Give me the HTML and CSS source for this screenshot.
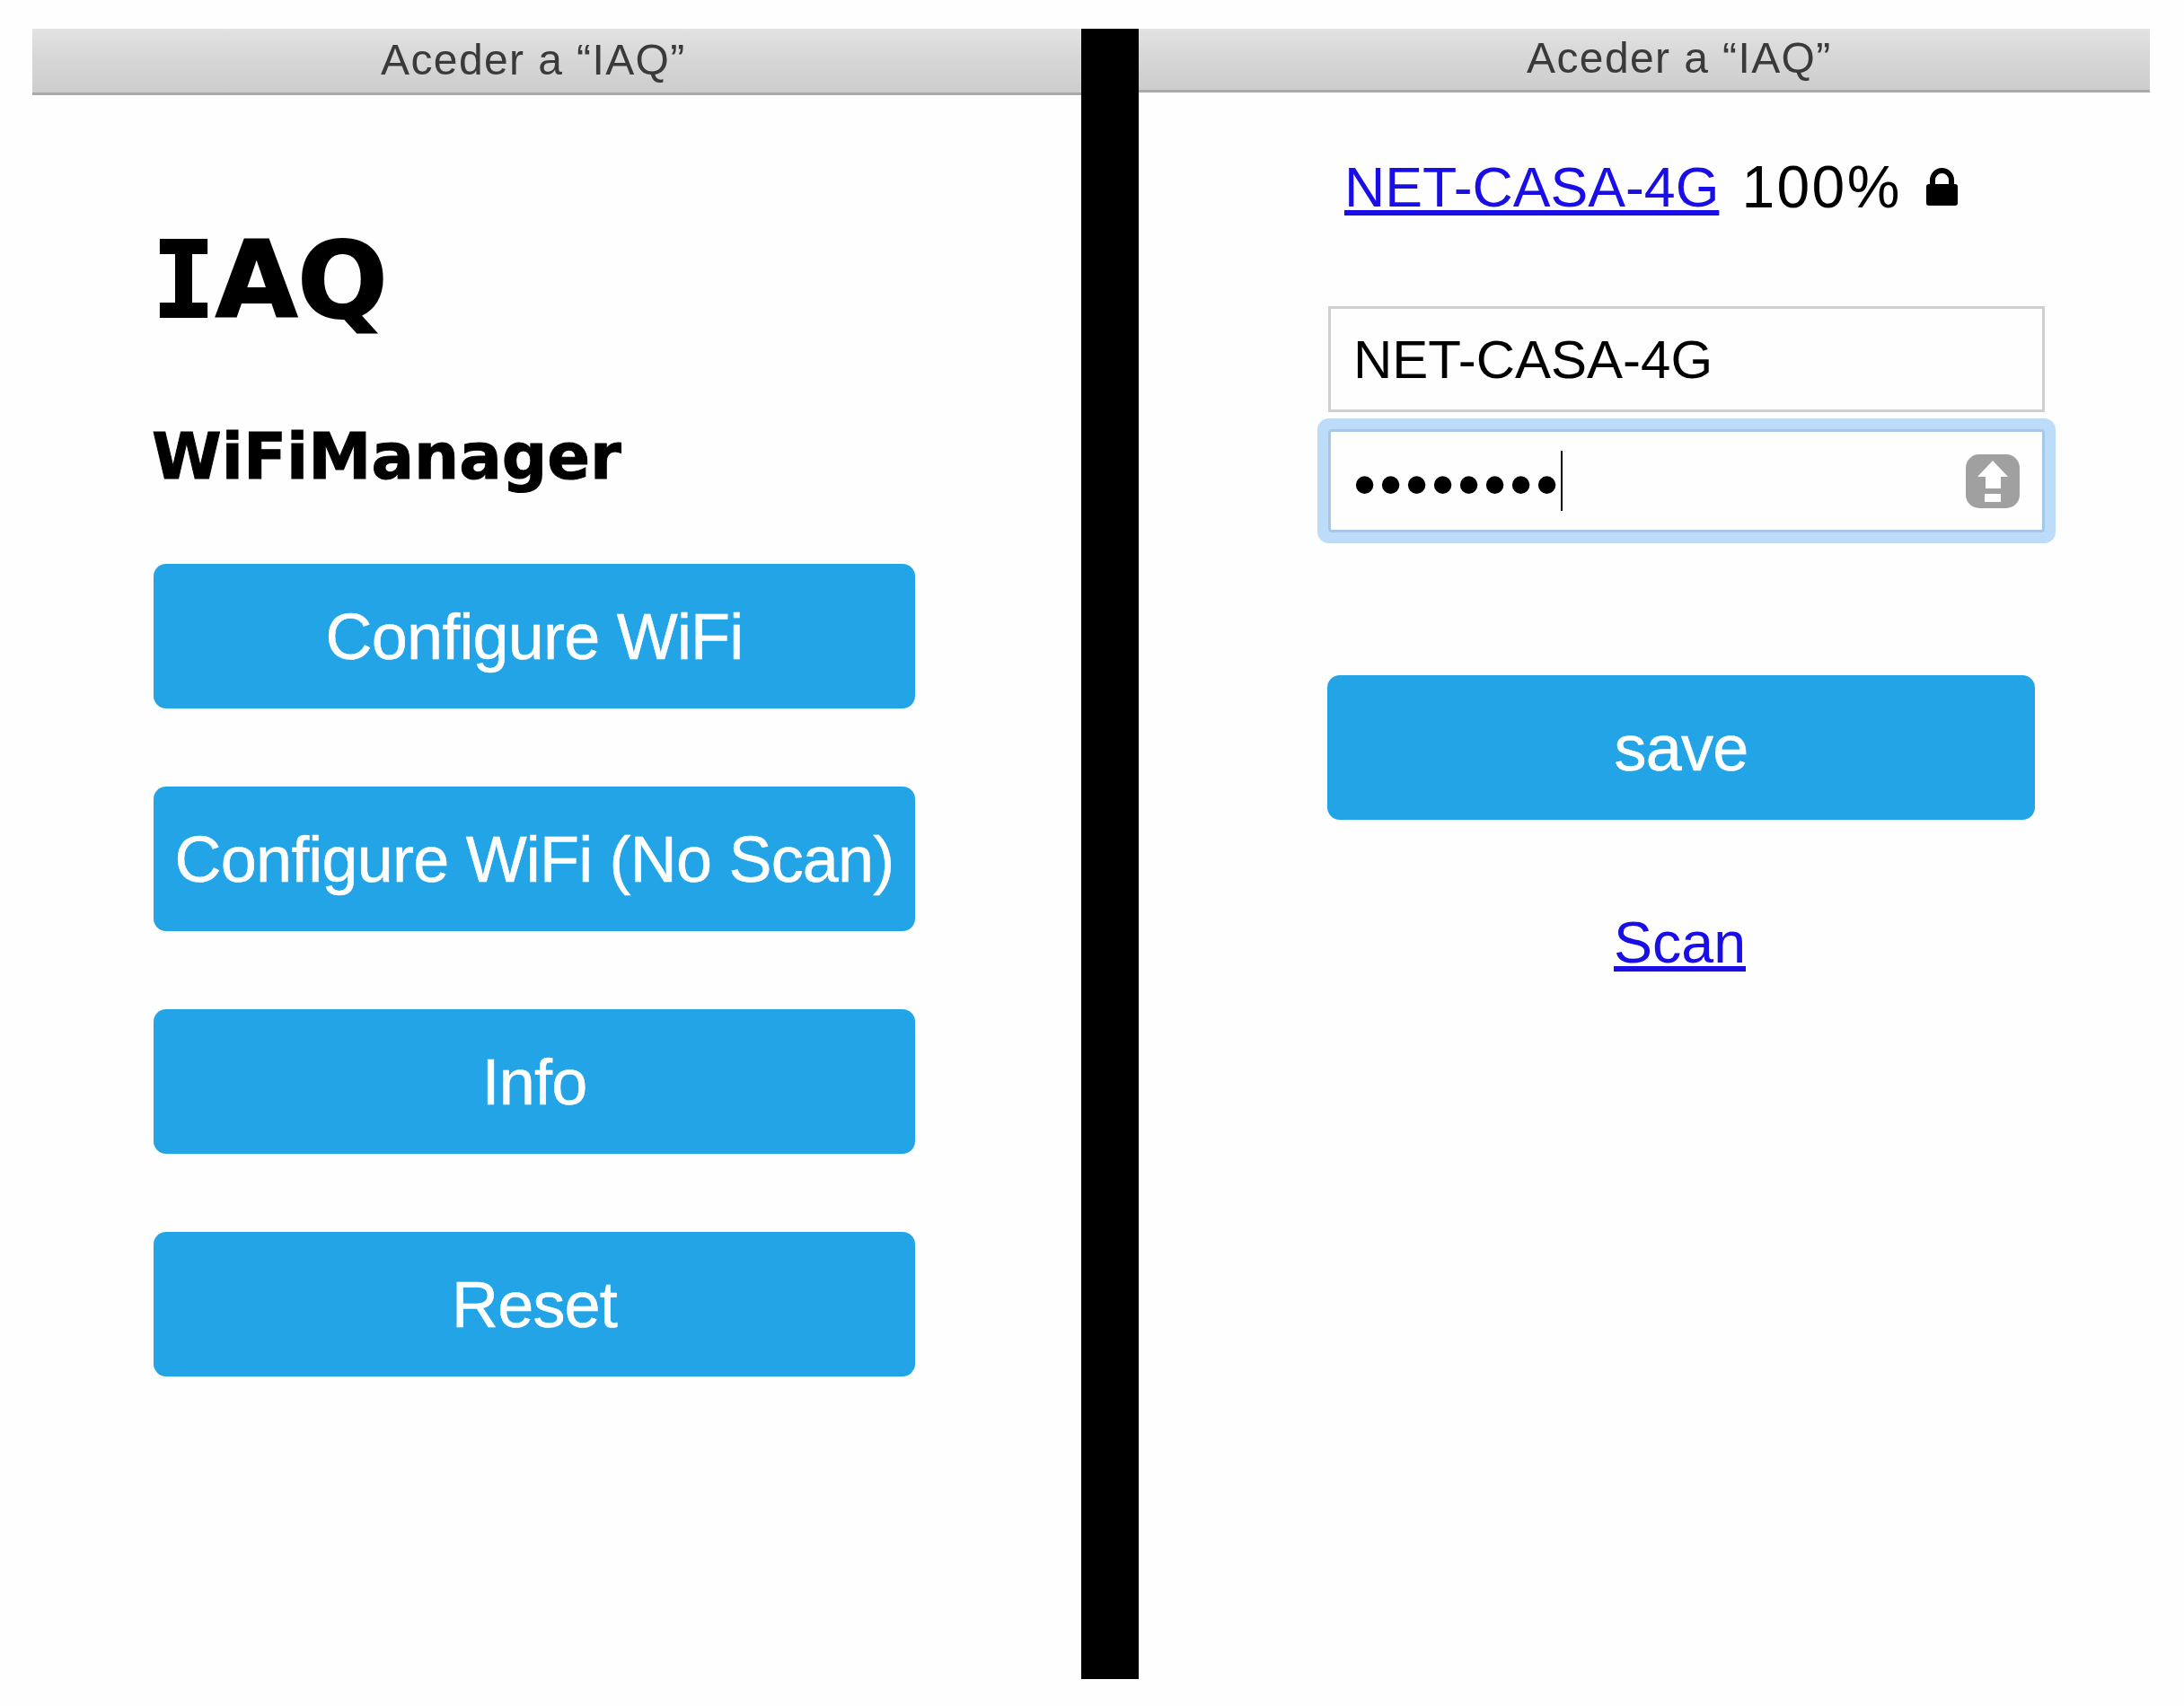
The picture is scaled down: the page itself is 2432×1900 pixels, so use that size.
FILE: index.html
```html
<!DOCTYPE html>
<html>
<head>
    <title>
        Aceder a IAQ
    </title>
    <link rel="stylesheet" href="styles.css">
</head>

<body>
    <div class="container">
        <!-- Main menu -->
        <div class="pane pane-left">
            <div class="title-bar title-left">Aceder a “IAQ”</div>
            <div class="menu">
                <h1 class="app-name"><span class="serif-i">I</span>AQ</h1>
                <h3 class="app-sub">WiFiManager</h3>
                <div class="button-list">
                    <button class="wifi-btn">Configure WiFi</button>
                    <button class="wifi-btn">Configure WiFi (No Scan)</button>
                    <button class="wifi-btn">Info</button>
                    <button class="wifi-btn">Reset</button>
                </div>
            </div>
        </div>

        <div class="divider"></div>

        <!-- Network form -->
        <div class="pane pane-right">
            <div class="title-bar title-right">Aceder a “IAQ”</div>
            <div class="form-div">
                <div class="network-row">
                    <a href="#" class="link">NET-CASA-4G</a>
                    <span class="signal">100%</span>
                    <svg class="lock" viewBox="0 0 35 42" width="35" height="42">
                        <path d="M7 20V13.5a10.5 10.5 0 0 1 21 0V20" fill="none" stroke="#000" stroke-width="6"/>
                        <rect x="0" y="18" width="35" height="24" rx="3" fill="#000"/>
                    </svg>
                </div>
                <div class="field field-first">NET-CASA-4G</div>
                <div class="field field-focus">
                    <span class="dots">••••••••</span>
                    <span class="caret"></span>
                    <svg class="caps" viewBox="0 0 60 60" width="60" height="60">
                        <rect width="60" height="60" rx="15" fill="#a0a0a0"/>
                        <path d="M30 7L47 25H39V38H22V25H13Z" fill="#fff"/>
                        <rect x="21" y="44" width="18" height="9" fill="#fff"/>
                    </svg>
                </div>
                <button class="wifi-btn save-btn">save</button>
                <div class="scan-row"><a href="#" class="link">Scan</a></div>
            </div>
        </div>
    </div>
</body>

</html>
```

FILE: styles.css
```css
body{
    margin: 0;
    padding: 0;
    background-color: #fefefe;
    font-family: "Liberation Sans", Arial, sans-serif;
}
/* the source is an upscaled screenshot, everything is a bit soft */
.container{
    display: flex;
    flex-direction: row;
    width: 2358px;
    height: 1838px;
    margin-top: 32px;
    margin-left: 36px;
    filter: blur(0.7px);
}
.pane-left{
    width: 1168px;
}
.pane-right{
    width: 1126px;
}
.divider{
    width: 64px;
    background-color: black;
}
.title-bar{
    box-sizing: border-box;
    background: linear-gradient(#e3e3e3, #d8d8d8 40%, #cdcdcd);
    border-bottom: 3px solid #a9a9a9;
    color: #3a3a3a;
    font-size: 48px;
    letter-spacing: 1.4px;
    white-space: nowrap;
}
.title-left{
    height: 74px;
    line-height: 70px;
    padding-left: 388px;
}
.title-right{
    height: 71px;
    line-height: 66px;
    padding-left: 432px;
}
.menu{
    padding-left: 133px;
}
.app-name{
    margin: 0;
    padding-top: 141px;
    font-family: "DejaVu Sans", Verdana, sans-serif;
    font-size: 118px;
    font-weight: bold;
    line-height: 130px;
    color: black;
    -webkit-text-stroke: 2px black;
}
.serif-i{
    font-family: "DejaVu Sans Mono", monospace;
}
.app-sub{
    margin: 0;
    padding-top: 87px;
    font-family: "DejaVu Sans", Verdana, sans-serif;
    font-size: 70.5px;
    font-weight: bold;
    line-height: 90px;
    color: black;
    -webkit-text-stroke: 1px black;
}
.button-list{
    display: flex;
    flex-direction: column;
    gap: 87px;
    margin-top: 74px;
    margin-left: 2px;
}
.wifi-btn{
    width: 848px;
    height: 161px;
    padding: 0;
    border: 0;
    border-radius: 14px;
    background-color: #22a4e6;
    color: white;
    font-family: "Liberation Sans", Arial, sans-serif;
    font-size: 72px;
    letter-spacing: -0.8px;
    -webkit-text-stroke: 0.5px white;
}
.form-div{
    padding-left: 211px;
}
.network-row{
    display: flex;
    align-items: center;
    height: 80px;
    margin-top: 65px;
    margin-left: 18px;
    font-size: 62.6px;
    color: black;
}
.link{
    color: #1a0ee6;
}
.signal{
    margin-left: 25px;
    font-size: 66px;
    letter-spacing: 2.4px;
}
.lock{
    margin-left: 27px;
    margin-top: -1px;
}
.field{
    box-sizing: border-box;
    display: flex;
    align-items: center;
    width: 798px;
    height: 118px;
    padding-left: 25px;
    border: 3px solid #cfcfcf;
    background-color: #fefefe;
    font-size: 60px;
    color: black;
}
.field-first{
    margin-top: 93px;
}
.field-focus{
    height: 115px;
    margin-top: 19px;
    border-color: #a6c8e8;
    box-shadow: 0 0 0 12px #bcdcf9;
    border-radius: 4px;
}
.dots{
    font-size: 72px;
    letter-spacing: 3.8px;
    margin-top: 6px;
}
.caret{
    width: 2px;
    height: 67px;
    margin-left: -1px;
    background-color: black;
}
.caps{
    margin-left: auto;
    margin-right: 25px;
}
.save-btn{
    display: block;
    width: 788px;
    margin-top: 159px;
    margin-left: -1px;
}
.scan-row{
    width: 789px;
    margin-top: 100px;
    margin-left: -3px;
    text-align: center;
    font-size: 64.5px;
}
```
